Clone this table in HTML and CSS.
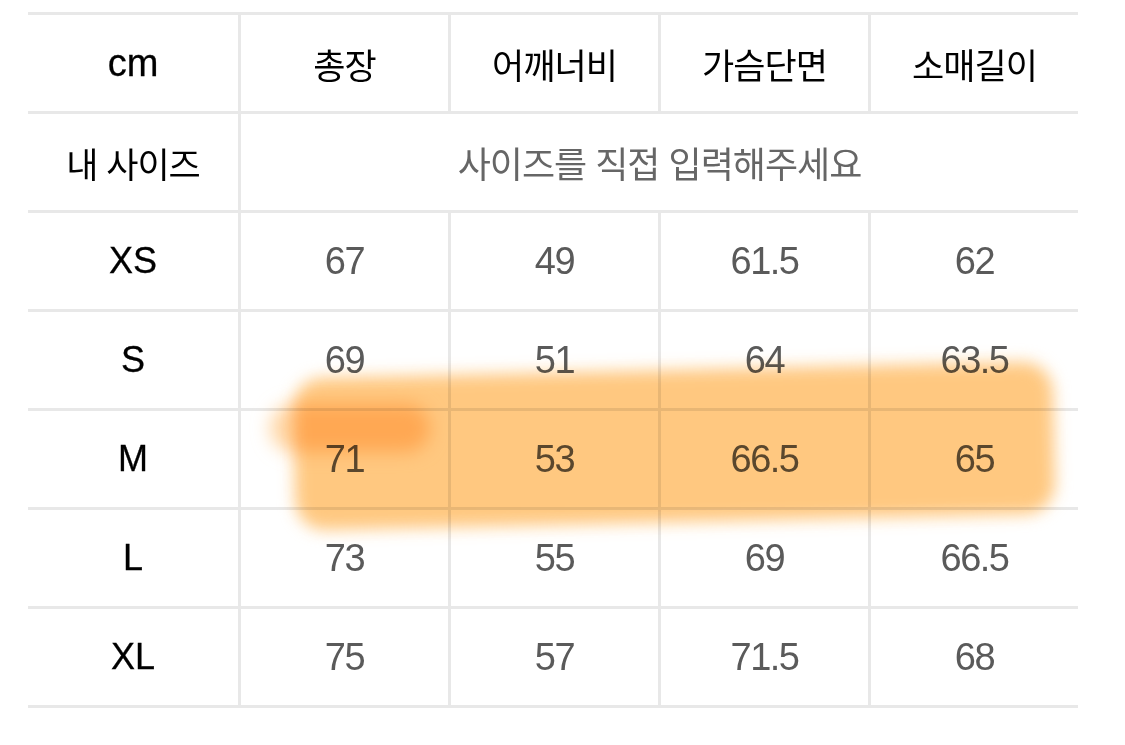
FILE: index.html
```html
<!DOCTYPE html>
<html lang="ko">
<head>
<meta charset="utf-8">
<title>사이즈표</title>
<link rel="stylesheet" href="styles.css">
</head>
<body>
<div class="sheet">
  <div class="size-table">
    <div class="cell unit first">cm</div>
    <div class="cell head">총장</div>
    <div class="cell head">어깨너비</div>
    <div class="cell head">가슴단면</div>
    <div class="cell head">소매길이</div>

    <div class="cell head first">내 사이즈</div>
    <div class="cell input span4">사이즈를 직접 입력해주세요</div>

    <div class="cell label first">XS</div>
    <div class="cell num">67</div>
    <div class="cell num">49</div>
    <div class="cell num">61.5</div>
    <div class="cell num">62</div>

    <div class="cell label first">S</div>
    <div class="cell num">69</div>
    <div class="cell num">51</div>
    <div class="cell num">64</div>
    <div class="cell num">63.5</div>

    <div class="cell label first">M</div>
    <div class="cell num">71</div>
    <div class="cell num">53</div>
    <div class="cell num">66.5</div>
    <div class="cell num">65</div>

    <div class="cell label first">L</div>
    <div class="cell num">73</div>
    <div class="cell num">55</div>
    <div class="cell num">69</div>
    <div class="cell num">66.5</div>

    <div class="cell label first">XL</div>
    <div class="cell num">75</div>
    <div class="cell num">57</div>
    <div class="cell num">71.5</div>
    <div class="cell num">68</div>
  </div>
  <div class="marker"></div>
  <div class="marker-dot"></div>
</div>
</body>
</html>
```

FILE: styles.css
```css
html, body {
  margin: 0;
  padding: 0;
  background: #ffffff;
}

.sheet {
  position: relative;
  width: 1125px;
  height: 745px;
  overflow: hidden;
}

.size-table {
  width: 1050px;
  margin: 12px 0 0 28px;
  display: grid;
  grid-template-columns: repeat(5, 210px);
  border-top: 3px solid #e8e8e8;
}

.cell {
  box-sizing: border-box;
  height: 99px;
  border-bottom: 3px solid #e8e8e8;
  border-left: 3px solid #e8e8e8;
  display: flex;
  align-items: center;
  justify-content: center;
  font-family: "Liberation Sans", "Noto Sans CJK KR", sans-serif;
}

.cell.first {
  border-left: none;
}

.unit {
  font-size: 38px;
  color: #000000;
  -webkit-text-stroke: 0.3px #000000;
}

.head {
  font-family: "Noto Sans CJK KR", sans-serif;
  font-size: 35px;
  font-weight: 400;
  color: #000000;
  letter-spacing: -1px;
}

.input {
  grid-column: span 4;
  font-family: "Noto Sans CJK KR", sans-serif;
  font-size: 36px;
  color: #666666;
  letter-spacing: -1px;
}

.label {
  font-size: 36px;
  color: #000000;
  -webkit-text-stroke: 0.3px #000000;
}

.num {
  font-size: 38px;
  color: #5a5a5a;
  letter-spacing: -1.5px;
}

.marker {
  position: absolute;
  left: 294px;
  top: 370px;
  width: 760px;
  height: 152px;
  background: #ffc272;
  border-radius: 30px;
  transform: rotate(-1.3deg);
  filter: blur(8px);
  mix-blend-mode: multiply;
  opacity: 0.9;
}

.marker-dot {
  position: absolute;
  left: 270px;
  top: 404px;
  width: 160px;
  height: 48px;
  background: #ffae4c;
  border-radius: 24px;
  filter: blur(9px);
  mix-blend-mode: multiply;
  opacity: 0.5;
}
```
